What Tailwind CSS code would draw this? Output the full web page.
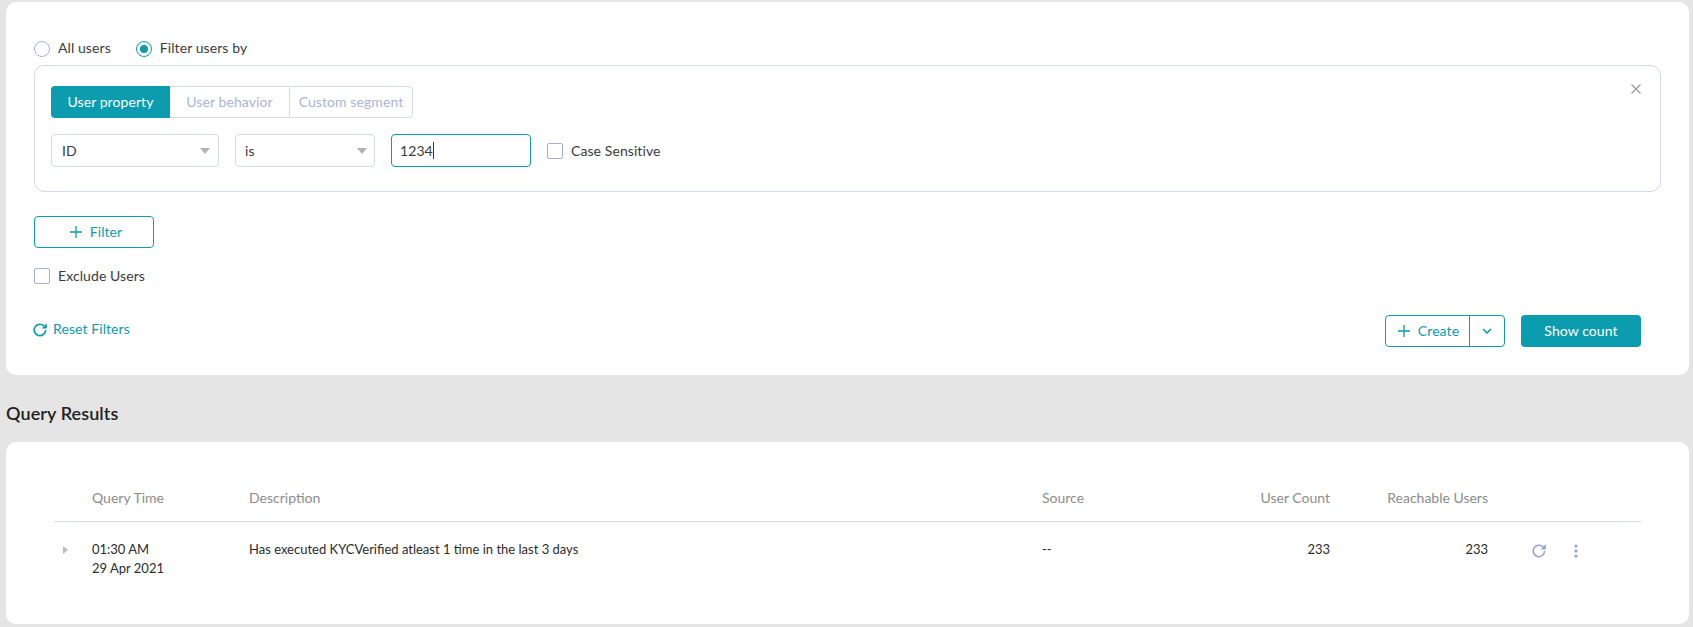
<!DOCTYPE html>
<html lang="en">
  <head>
    <meta charset="UTF-8" />
    <title>Query Results</title>
    <script src="https://cdn.jsdelivr.net/npm/@tailwindcss/browser@4"></script>
  </head>
  <body class="bg-[#e5e5e5] font-['Lato',sans-serif] text-[14px] tracking-[0.006em] text-[#3b3b3b] h-[627px] overflow-hidden">
    <!-- Filter card -->
    <section class="mt-[2px] ml-[6px] mr-[4px] h-[373px] bg-white rounded-[10px] pt-[39px] pl-[28px] pr-[28px]">
      <!-- Radios -->
      <div class="flex items-center h-[16px] gap-[8px]">
        <span class="w-[16px] h-[16px] rounded-full border border-[#a3b1d6] bg-white"></span>
        <span class="pb-[3px]">All users</span>
        <span class="ml-[17px] w-[16px] h-[16px] rounded-full border border-[#0c9cb0] flex items-center justify-center">
          <span class="w-[8px] h-[8px] rounded-full bg-[#0c9cb0]"></span>
        </span>
        <span class="pb-[3px]">Filter users by</span>
      </div>

      <!-- Filter box -->
      <div class="relative mt-[8px] h-[127px] w-[1627px] border border-[#d3d9ea] rounded-[10px] pt-[20px] pl-[16px]">
        <button class="absolute top-[18px] right-[19px] text-[#9a9a9a]">
          <svg class="w-[10px] h-[10px] block" viewBox="0 0 10 10" fill="none" stroke="currentColor" stroke-width="1.2"><path d="M0.5 0.5l9 9M9.5 0.5l-9 9" /></svg>
        </button>
        <div class="flex h-[32px] w-[362px] text-[#a9b5d6]">
          <div class="w-[119px] bg-[#0c9cb0] text-white rounded-l-[4px] flex items-center justify-center pb-[2px]">User property</div>
          <div class="w-[119px] border-y border-[#d3d9ea] flex items-center justify-center pb-[2px]">User behavior</div>
          <div class="w-[124px] border border-[#d3d9ea] rounded-r-[4px] flex items-center justify-center pb-[2px]">Custom segment</div>
        </div>
        <div class="flex items-center mt-[16px] h-[33px]">
          <div class="w-[168px] h-full border border-[#d3d9ea] rounded-[4px] flex items-center justify-between pl-[10px] pr-[8px]">
            <span class="pb-[1px]">ID</span>
            <span class="w-0 h-0 border-x-[5px] border-x-transparent border-t-[6px] border-t-[#b3b3b3]"></span>
          </div>
          <div class="ml-[16px] w-[140px] h-full border border-[#d3d9ea] rounded-[4px] flex items-center justify-between pl-[9px] pr-[7px]">
            <span class="pb-[1px]">is</span>
            <span class="w-0 h-0 border-x-[5px] border-x-transparent border-t-[6px] border-t-[#b3b3b3]"></span>
          </div>
          <div class="ml-[16px] w-[140px] h-full border border-[#0c9cb0] rounded-[4px] flex items-center pl-[8px]">
            <span class="pb-[1px]">1234</span><span class="w-px h-[17px] bg-[#333]"></span>
          </div>
          <span class="ml-[16px] w-[16px] h-[16px] border border-[#a3b1d6] rounded-[2px]"></span>
          <span class="ml-[8px] pb-[1px]">Case Sensitive</span>
        </div>
      </div>

      <button class="mt-[24px] w-[120px] h-[32px] border border-[#0c9cb0] rounded-[4px] text-[#0c9cb0] flex items-center justify-center gap-[8px] pl-[4px]">
        <svg class="w-[12px] h-[12px]" viewBox="0 0 12 12" fill="none" stroke="currentColor" stroke-width="1.3"><path d="M6 0v12M0 6h12" /></svg>
        <span class="pb-[2px]">Filter</span>
      </button>

      <div class="flex items-center mt-[20px] h-[16px] gap-[8px]">
        <span class="w-[16px] h-[16px] border border-[#a3b1d6] rounded-[2px]"></span>
        <span class="pb-[2px]">Exclude Users</span>
      </div>

      <!-- Footer actions -->
      <div class="flex items-center justify-between mt-[31px] h-[32px] pr-[20px]">
        <div class="flex items-center gap-[6px] text-[#0c9cb0] -mt-[3px] -ml-px">
          <svg class="w-[14px] h-[14px]" viewBox="0 0 14 14" fill="none"><path d="M12.6 7a5.7 5.7 0 1 1-1.7-4.1" stroke="currentColor" stroke-width="1.7" /><path d="M13.8 0.2v5.2H8.6z" fill="currentColor" /></svg>
          <span class="pb-[2px]">Reset Filters</span>
        </div>
        <div class="flex items-center gap-[16px]">
          <div class="flex w-[120px] h-[32px] border border-[#0c9cb0] rounded-[4px] text-[#0c9cb0]">
            <div class="w-[84px] border-r border-[#0c9cb0] flex items-center justify-center gap-[8px] pl-[2px]">
              <svg class="w-[12px] h-[12px]" viewBox="0 0 12 12" fill="none" stroke="currentColor" stroke-width="1.3"><path d="M6 0v12M0 6h12" /></svg>
              <span class="pb-[2px]">Create</span>
            </div>
            <div class="flex-1 flex items-center justify-center">
              <svg class="w-[10px] h-[6px]" viewBox="0 0 10 6" fill="none" stroke="currentColor" stroke-width="1.6"><path d="M1 1l4 4 4-4" /></svg>
            </div>
          </div>
          <button class="w-[120px] h-[32px] bg-[#0c9cb0] text-white rounded-[4px] pb-[2px]">Show count</button>
        </div>
      </div>
    </section>

    <h2 class="ml-[6px] mt-[26px] h-[24px] leading-[24px] text-[18px] font-semibold text-[#222] tracking-[0.005em]">Query Results</h2>

    <!-- Results card -->
    <section class="mt-[17px] ml-[6px] mr-[4px] h-[182px] bg-white rounded-[10px] pt-[45px] pl-[48px] pr-[48px]">
      <div class="grid grid-cols-[38px_157px_793px_158px_130px_158px_153px] h-[35px] border-b border-[#d3d9ea] text-[#8c8c8c] tracking-normal">
        <span></span>
        <span>Query Time</span>
        <span>Description</span>
        <span>Source</span>
        <span class="text-right">User Count</span>
        <span class="text-right">Reachable Users</span>
        <span></span>
      </div>
      <div class="grid grid-cols-[38px_157px_793px_158px_130px_158px_153px] pt-[18px] text-[13px] tracking-normal leading-[19px] text-[#2b2b2b]">
        <span class="pl-[9px] pt-[6px]"><span class="block w-0 h-0 border-y-[4px] border-y-transparent border-l-[5px] border-l-[#bdbdbd]"></span></span>
        <div>
          <div>01:30 AM</div>
          <div>29 Apr 2021</div>
        </div>
        <span>Has executed KYCVerified atleast 1 time in the last 3 days</span>
        <span>--</span>
        <span class="text-right">233</span>
        <span class="text-right">233</span>
        <div class="flex items-start pl-[44px] pt-[4px] text-[#8fa3d6]">
          <svg class="w-[14px] h-[14px]" viewBox="0 0 14 14" fill="none"><path d="M12.6 7a5.7 5.7 0 1 1-1.7-4.1" stroke="currentColor" stroke-width="1.5" /><path d="M13.8 0.2v5.2H8.6z" fill="currentColor" /></svg>
          <svg class="ml-[28px] w-[4px] h-[14px]" viewBox="0 0 4 14" fill="currentColor"><circle cx="2" cy="2" r="1.6" /><circle cx="2" cy="7" r="1.6" /><circle cx="2" cy="12" r="1.6" /></svg>
        </div>
      </div>
    </section>
  </body>
</html>
